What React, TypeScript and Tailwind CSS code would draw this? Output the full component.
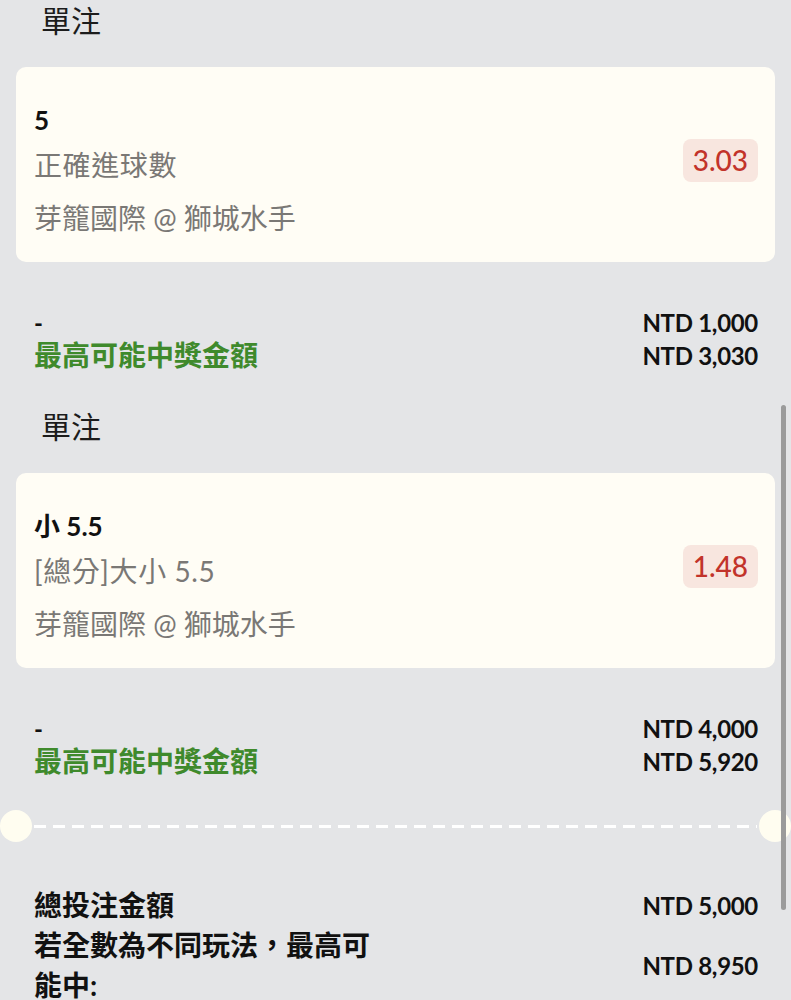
const font = "font-['Lato','Noto_Sans_CJK_TC',sans-serif]";

type Bet = {
  pick: string;
  market: string;
  match: string;
  odds: string;
  stake: string;
  payout: string;
};

const bets: Bet[] = [
  {
    pick: "5",
    market: "正確進球數",
    match: "芽籠國際 @ 獅城水手",
    odds: "3.03",
    stake: "NTD 1,000",
    payout: "NTD 3,030",
  },
  {
    pick: "小 5.5",
    market: "[總分]大小 5.5",
    match: "芽籠國際 @ 獅城水手",
    odds: "1.48",
    stake: "NTD 4,000",
    payout: "NTD 5,920",
  },
];

function BetSection({ bet }: { bet: Bet }) {
  return (
    <section className="flex flex-col">
      <h2 className="pl-[25px] text-[30px] leading-[40px] text-[#1c1c1c]">單注</h2>
      <div className="mt-[27px] flex items-center justify-between rounded-[10px] bg-[#fffdf5] pl-[18px] pr-[17px] pt-[36px] pb-[22px]">
        <div className="flex flex-col">
          <div className="text-[26px] font-bold leading-[34px] text-[#111]">{bet.pick}</div>
          <div className="mt-[6px] text-[28px] leading-[44px] tracking-[0.6px] text-[#7a7875]">{bet.market}</div>
          <div className="mt-[9px] text-[28px] leading-[44px] text-[#7a7875]">{bet.match}</div>
        </div>
        <div className="mb-[22px] rounded-[8px] bg-[#f8e6df] px-[10px] py-[4px] text-[28px] font-medium leading-[35px] text-[#c2332a]">
          {bet.odds}
        </div>
      </div>
      <div className="mt-[44px] flex justify-between pl-[18px] pr-[17px]">
        <div className="flex flex-col">
          <div className="text-[24px] font-bold leading-[33px] text-[#111]">-</div>
          <div className="text-[28px] font-bold leading-[33px] text-[#3f8a2c]">最高可能中獎金額</div>
        </div>
        <div className="flex flex-col items-end text-[24px] font-bold leading-[33px] tracking-[-0.3px] text-[#111]">
          <div>{bet.stake}</div>
          <div>{bet.payout}</div>
        </div>
      </div>
    </section>
  );
}

export default function App() {
  return (
    <div className={`relative h-[1000px] overflow-hidden bg-[#e4e5e7] ${font}`}>
      <div className="flex flex-col gap-[34px] px-[16px]">
        {bets.map((b, i) => (
          <BetSection key={i} bet={b} />
        ))}
      </div>

      <div className="mt-[32px] flex items-center">
        <div className="h-[32px] w-[32px] shrink-0 rounded-full bg-[#fffdf0]" />
        <div className="mx-[2px] h-[3px] flex-1 bg-[repeating-linear-gradient(90deg,#ffffff_0_12px,transparent_12px_19px)]" />
        <div className="h-[32px] w-[32px] shrink-0 rounded-full bg-[#fffdf0]" />
      </div>

      <div className="mt-[43px] flex flex-col pl-[34px] pr-[33px]">
        <div className="flex items-center justify-between">
          <div className="text-[28px] font-bold leading-[40px] text-[#111]">總投注金額</div>
          <div className="text-[24px] font-bold leading-[33px] tracking-[-0.3px] text-[#111]">NTD 5,000</div>
        </div>
        <div className="flex items-center justify-between">
          <div className="max-w-[360px] text-[28px] font-bold leading-[40px] text-[#111]">
            若全數為不同玩法，最高可能中:
          </div>
          <div className="text-[24px] font-bold leading-[33px] tracking-[-0.3px] text-[#111]">NTD 8,950</div>
        </div>
      </div>

      <div className="absolute right-[5px] top-[405px] h-[505px] w-[5px] rounded-full bg-[#9b9b9b]" />
    </div>
  );
}
